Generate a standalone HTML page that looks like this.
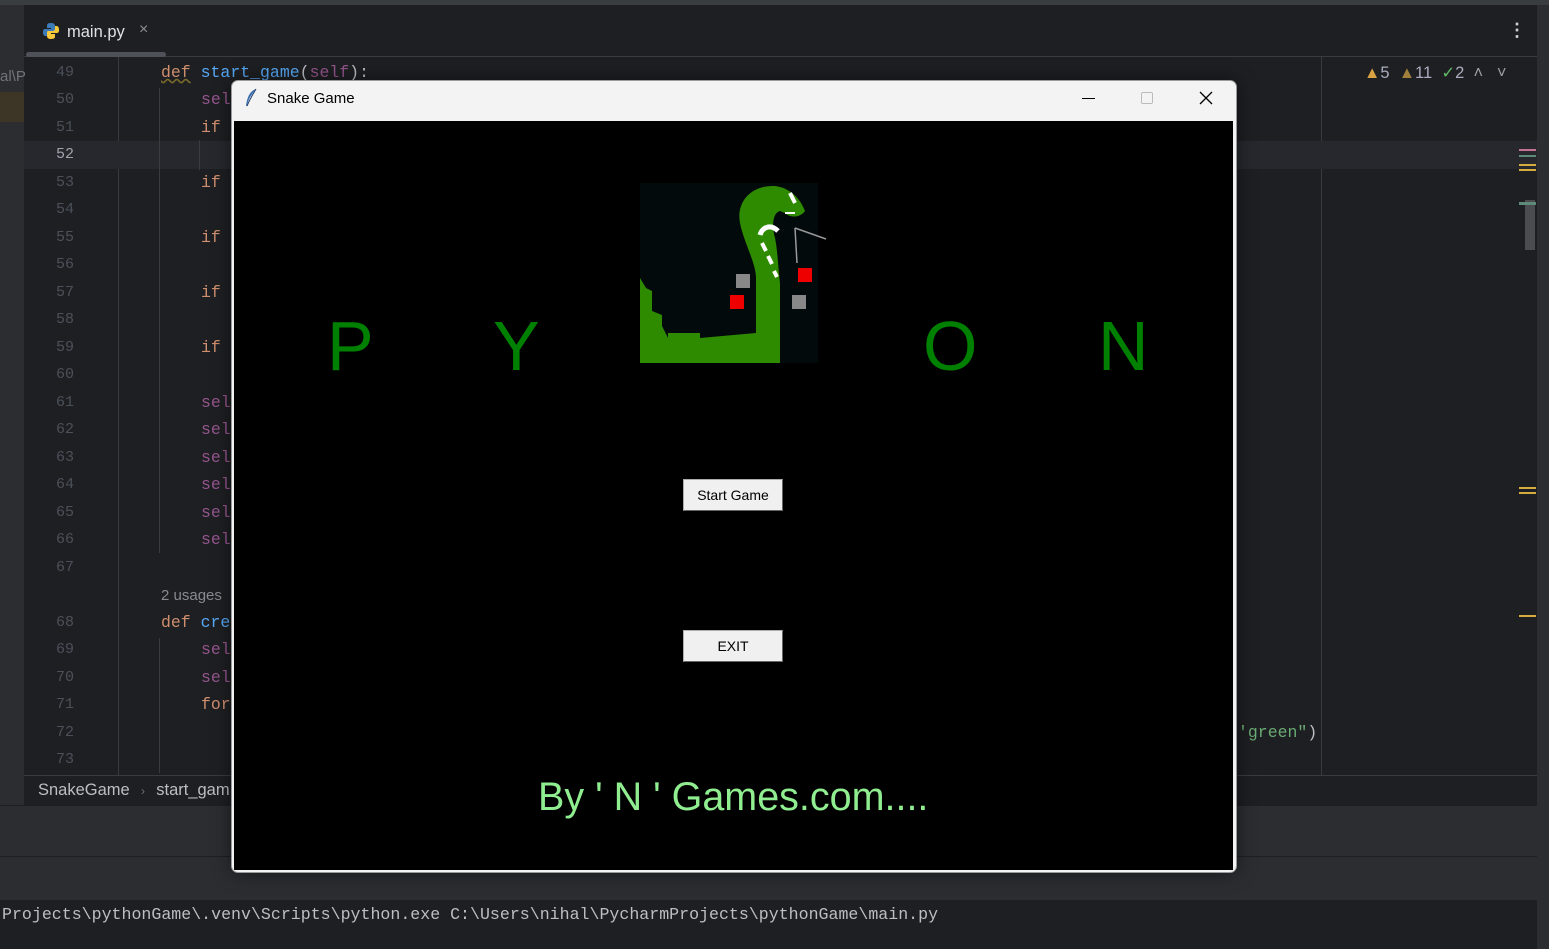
<!DOCTYPE html>
<html><head><style>
*{margin:0;padding:0;box-sizing:border-box}
body{width:1549px;height:949px;background:#1e1f22;position:relative;overflow:hidden;font-family:"Liberation Sans",sans-serif}
.a{position:absolute}
.mono{font-family:"Liberation Mono","DejaVu Sans Mono",monospace;font-size:16.5px}
.ln{position:absolute;left:40px;width:34px;text-align:right;color:#4b5059;font-family:"Liberation Mono",monospace;font-size:15px}
.kw{color:#cf8e6d}.sf{color:#94558d}.fn{color:#56a8f5}
</style></head><body>
<div class="a" style="left:0;top:0;width:1549px;height:5px;background:#3a3d40"></div>
<div class="a" style="left:0;top:5px;width:24px;height:800px;background:#2b2d30"></div>
<div class="a" style="left:0;top:92px;width:24px;height:30px;background:#3d3526"></div>
<div class="a" style="left:0;top:68px;color:#6f737a;font-size:15px">al\P</div>
<div class="a" style="left:1537px;top:5px;width:12px;height:944px;background:#2b2d30"></div>
<div class="a" style="left:24px;top:56px;width:1513px;height:1px;background:#393b40"></div>
<svg class="a" style="left:42px;top:22px" width="18" height="18" viewBox="0 0 18 18"><path d="M9 1C5 1 5 2.5 5 4v2h4v1H3C1 7 1 9 1 10.5S1.5 14 3.5 14H5v-2.5C5 10 6 9 7.5 9h4C13 9 13 8 13 7V4C13 2 11.5 1 9 1z" fill="#3d7ab8"/><path d="M9 17c4 0 4-1.5 4-3v-2H9v-1h6c2 0 2-2 2-3.5S16.5 4 14.5 4H13v2.5C13 8 12 9 10.5 9h-4C5 9 5 10 5 11v3c0 2 1.5 3 4 3z" fill="#f5c93b"/></svg>
<div class="a" style="left:67px;top:23px;color:#dfe1e5;font-size:16.5px">main.py</div>
<div class="a" style="left:139px;top:21px;color:#8c8f94;font-size:16px">×</div>
<div class="a" style="left:26px;top:52px;width:140px;height:5px;border-radius:3px;background:#4e5157"></div>
<div class="a" style="left:1508px;top:20px;color:#ced0d6;font-size:18px;font-weight:bold">⋮</div>
<div class="a" style="left:118px;top:57px;width:1px;height:718px;background:#393b40"></div>
<div class="a" style="left:1321px;top:57px;width:1px;height:718px;background:#393b40"></div>
<div class="a" style="left:24px;top:141px;width:1513px;height:28px;background:#26282e"></div>
<div class="a" style="left:159px;top:88px;width:1px;height:465px;background:#393b40"></div>
<div class="a" style="left:159px;top:638px;width:1px;height:135px;background:#393b40"></div>
<div class="a" style="left:199px;top:140px;width:1px;height:30px;background:#393b40"></div>
<div id="lines"></div>
<div class="a mono" style="left:161px;top:63px"><span class="kw" style="text-decoration:underline wavy #7a6a2a">def</span> <span class="fn">start_game</span><span style="color:#bcbec4">(</span><span class="sf">self</span><span style="color:#bcbec4">):</span></div>
<div class="a" style="left:161px;top:587px;color:#868a91;font-size:15px">2 usages</div>
<div class="a mono" style="left:161px;top:613px"><span class="kw">def</span> <span class="fn">cre</span></div>
<div class="a mono" style="left:1238px;top:723px;color:#6aab73">'green"<span style="color:#bcbec4">)</span></div>
<div class="a" style="left:1364px;top:63px;font-size:16.5px;color:#a8adbd"><span style="color:#d9a343">▲</span>5 &nbsp;<span style="color:#a0803b">▲</span>11 &nbsp;<span style="color:#5fb865">✓</span>2 &nbsp;<span style="color:#9da0a8">˄ &nbsp; ˅</span></div>
<div class="a" style="left:1519px;top:149px;width:17px;height:2px;background:#c77196"></div>
<div class="a" style="left:1519px;top:155px;width:17px;height:2px;background:#5f8a78"></div>
<div class="a" style="left:1519px;top:164px;width:17px;height:2px;background:#d6ac3e"></div>
<div class="a" style="left:1519px;top:169px;width:17px;height:2px;background:#d6ac3e"></div>
<div class="a" style="left:1525px;top:200px;width:10px;height:50px;background:#4a4c50"></div>
<div class="a" style="left:1519px;top:202px;width:17px;height:3px;background:#5f8a78"></div>
<div class="a" style="left:1519px;top:487px;width:17px;height:2px;background:#d6ac3e"></div>
<div class="a" style="left:1519px;top:492px;width:17px;height:2px;background:#d6ac3e"></div>
<div class="a" style="left:1519px;top:615px;width:17px;height:2px;background:#d6ac3e"></div>
<div class="a" style="left:24px;top:775px;width:1513px;height:1px;background:#393b40"></div>
<div class="a" style="left:38px;top:781px;color:#bcbec4;font-size:16.5px">SnakeGame <span style="color:#6f737a;font-size:12px">&nbsp;&nbsp;›&nbsp;&nbsp;</span> start_gam</div>
<div class="a" style="left:0;top:806px;width:1537px;height:94px;background:#2b2d30"></div>
<div class="a" style="left:0;top:856px;width:1537px;height:1px;background:#1e1f22"></div>
<div class="a mono" style="left:2px;top:905px;color:#bcbec4;font-size:16.6px">Projects\pythonGame\.venv\Scripts\python.exe C:\Users\nihal\PycharmProjects\pythonGame\main.py</div>
<div class="a" style="left:231px;top:80px;width:1006px;height:793px;background:#f3f3f3;border:1px solid #9a9a9a;border-radius:7px;box-shadow:0 0 18px rgba(0,0,0,.5)"></div>
<svg class="a" style="left:244px;top:88px" width="14" height="20" viewBox="0 0 14 20"><path d="M12 1C6 3 3 9 2 18l1 0C4 12 7 7 12 1z" fill="#3b6fb0"/><path d="M12 1C9 6 6 11 3 18" stroke="#1e3d6b" stroke-width="1" fill="none"/></svg>
<div class="a" style="left:267px;top:90px;color:#000;font-size:15px">Snake Game</div>
<div class="a" style="left:1082px;top:98px;width:13px;height:1px;background:#000"></div>
<div class="a" style="left:1141px;top:92px;width:12px;height:12px;border:1px solid #bbb;border-radius:2px"></div>
<svg class="a" style="left:1199px;top:91px" width="14" height="14"><path d="M1 1L13 13M13 1L1 13" stroke="#000" stroke-width="1.3"/></svg>
<div class="a" style="left:234px;top:121px;width:999px;height:749px;background:#000"></div>
<div class="a" style="left:327px;top:306px;color:#008000;font-size:70px">P</div>
<div class="a" style="left:493px;top:306px;color:#008000;font-size:70px">Y</div>
<div class="a" style="left:923px;top:306px;color:#008000;font-size:70px">O</div>
<div class="a" style="left:1098px;top:306px;color:#008000;font-size:70px">N</div>
<svg class="a" style="left:640px;top:183px" width="190" height="180" viewBox="0 0 190 180">
<rect width="178" height="180" fill="#020a0c"/>
<path d="M0 95L6 105L12 108L12 128L22 132L22 143L28 155L28 150L60 150L60 155L116 150L116 95C116 80 104 60 100 40C96 20 110 2 135 3C150 5 160 15 165 28C160 35 150 35 145 30L140 28C132 30 132 45 135 55C138 70 138 85 140 100L140 180L0 180Z" fill="#2e8b00"/>
<rect x="96" y="91" width="14" height="14" fill="#888"/><rect x="90" y="112" width="14" height="14" fill="#e00"/>
<rect x="158" y="85" width="14" height="14" fill="#e00"/><rect x="152" y="112" width="14" height="14" fill="#888"/>
<path d="M155 45L186 56M155 45L157 80" stroke="#999" stroke-width="1.5"/>
<path d="M138 48C130 40 122 45 120 52" stroke="#fff" stroke-width="5" fill="none"/>
<path d="M122 60l4 8M128 73l4 8M134 88l3 6M150 10l5 10" stroke="#fff" stroke-width="4"/>
<path d="M145 30h10" stroke="#fff" stroke-width="2"/>
</svg>
<div class="a" style="left:683px;top:479px;width:100px;height:32px;background:#f0f0f0;border:1px solid #adadad;border-right-color:#666;border-bottom-color:#666;color:#000;font-size:14px;text-align:center;line-height:30px">Start Game</div>
<div class="a" style="left:683px;top:630px;width:100px;height:32px;background:#f0f0f0;border:1px solid #adadad;border-right-color:#666;border-bottom-color:#666;color:#000;font-size:14px;text-align:center;line-height:30px">EXIT</div>
<div class="a" style="left:538px;top:775px;color:#90ee90;font-size:39.5px">By ' N ' Games.com....</div>
<script>
var h='',codes={50:['sel','sf'],51:['if','kw'],53:['if','kw'],55:['if','kw'],57:['if','kw'],59:['if','kw'],61:['sel','sf'],62:['sel','sf'],63:['sel','sf'],64:['sel','sf'],65:['sel','sf'],66:['sel','sf'],69:['sel','sf'],70:['sel','sf'],71:['for','kw']};
for(var n=49;n<=73;n++){var slot=n-49+(n>=68?1:0);var y=64+slot*27.48;
h+='<div class="ln" style="top:'+y+'px;'+(n==52?'color:#a1a3ab':'')+'">'+n+'</div>';
if(codes[n])h+='<div class="a mono '+codes[n][1]+'" style="left:201px;top:'+(y-1)+'px">'+codes[n][0]+'</div>';}
document.getElementById('lines').innerHTML=h;
</script>
</body></html>
